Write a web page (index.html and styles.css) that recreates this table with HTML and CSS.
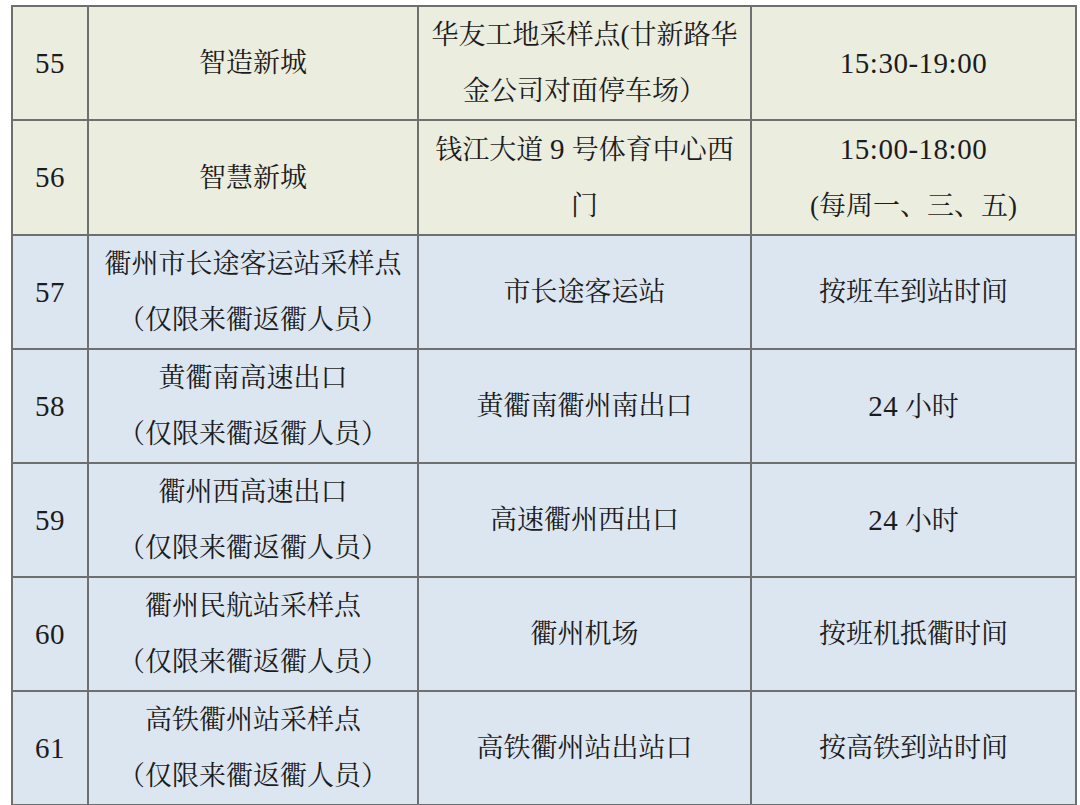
FILE: index.html
```html
<!DOCTYPE html>
<html lang="zh-CN">
<head>
<meta charset="utf-8">
<link rel="stylesheet" href="styles.css">
</head>
<body>
<table class="sites">
  <colgroup>
    <col class="c-no"><col class="c-name"><col class="c-addr"><col class="c-time">
  </colgroup>
  <tbody>
    <tr class="green">
      <td><span class="num">55</span></td>
      <td>智造新城</td>
      <td>华友工地采样点(廿新路华<br>金公司对面停车场）</td>
      <td><span class="num">15:30-19:00</span></td>
    </tr>
    <tr class="green">
      <td><span class="num">56</span></td>
      <td>智慧新城</td>
      <td>钱江大道 <span class="num">9</span> 号体育中心西<br>门</td>
      <td><span class="num">15:00-18:00</span><br>(每周一、三、五)</td>
    </tr>
    <tr class="blue">
      <td><span class="num">57</span></td>
      <td>衢州市长途客运站采样点<br>（仅限来衢返衢人员）</td>
      <td>市长途客运站</td>
      <td>按班车到站时间</td>
    </tr>
    <tr class="blue">
      <td><span class="num">58</span></td>
      <td>黄衢南高速出口<br>（仅限来衢返衢人员）</td>
      <td>黄衢南衢州南出口</td>
      <td><span class="num">24</span> 小时</td>
    </tr>
    <tr class="blue">
      <td><span class="num">59</span></td>
      <td>衢州西高速出口<br>（仅限来衢返衢人员）</td>
      <td>高速衢州西出口</td>
      <td><span class="num">24</span> 小时</td>
    </tr>
    <tr class="blue">
      <td><span class="num">60</span></td>
      <td>衢州民航站采样点<br>（仅限来衢返衢人员）</td>
      <td>衢州机场</td>
      <td>按班机抵衢时间</td>
    </tr>
    <tr class="blue">
      <td><span class="num">61</span></td>
      <td>高铁衢州站采样点<br>（仅限来衢返衢人员）</td>
      <td>高铁衢州站出站口</td>
      <td>按高铁到站时间</td>
    </tr>
  </tbody>
</table>
</body>
</html>
```

FILE: styles.css
```css
html, body {
  margin: 0;
  padding: 0;
  background: #ffffff;
  overflow: hidden;
}
body {
  padding: 5px 0 0 11px;
  font-family: "Liberation Serif", "Noto Serif CJK SC", "Noto Sans CJK SC", serif;
  color: #1c1c1c;
}
.sites {
  border-collapse: collapse;
  table-layout: fixed;
  width: 1064px;
}
.c-no { width: 76px; }
.c-name { width: 330px; }
.c-addr { width: 333px; }
.c-time { width: 325px; }
.sites td {
  border: 2px solid #6f6f6f;
  height: 112px;
  padding: 0;
  text-align: center;
  vertical-align: middle;
  font-size: 27px;
  line-height: 56px;
  white-space: nowrap;
}
.num {
  font-size: 29px;
  letter-spacing: 0.5px;
}
.green td { background: #ebeddf; }
.blue td { background: #dce6f1; }
```
